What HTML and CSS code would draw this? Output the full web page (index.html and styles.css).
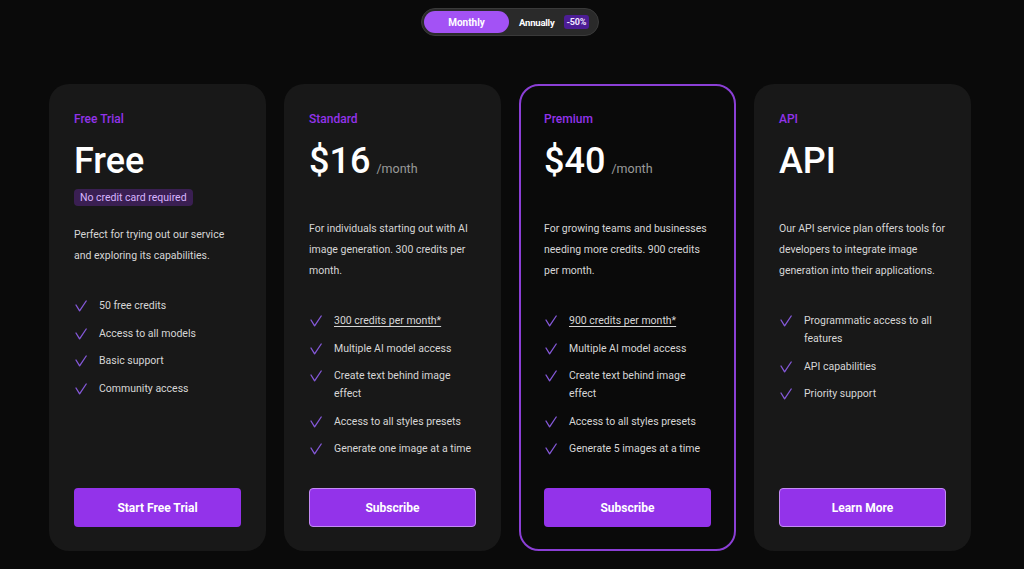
FILE: index.html
```html
<!DOCTYPE html>
<html lang="en">
<head>
<meta charset="utf-8">
<title>Pricing</title>
<link rel="stylesheet" href="styles.css">
</head>
<body>
<div class="page">
  <div class="toggle">
    <button class="toggle-btn active">Monthly</button>
    <div class="toggle-opt">Annually <span class="save">-50%</span></div>
  </div>

  <div class="cards">
    <div class="card">
      <div class="label">Free Trial</div>
      <div class="price"><span class="amount">Free</span></div>
      <div class="badge">No credit card required</div>
      <p class="desc">Perfect for trying out our service and exploring its capabilities.</p>
      <ul class="features">
        <li><svg class="check" viewBox="0 0 12 12"><path d="M1 5 L4.6 10.8 L11.2 1"/></svg><span>50 free credits</span></li>
        <li><svg class="check" viewBox="0 0 12 12"><path d="M1 5 L4.6 10.8 L11.2 1"/></svg><span>Access to all models</span></li>
        <li><svg class="check" viewBox="0 0 12 12"><path d="M1 5 L4.6 10.8 L11.2 1"/></svg><span>Basic support</span></li>
        <li><svg class="check" viewBox="0 0 12 12"><path d="M1 5 L4.6 10.8 L11.2 1"/></svg><span>Community access</span></li>
      </ul>
      <button class="cta">Start Free Trial</button>
    </div>

    <div class="card">
      <div class="label">Standard</div>
      <div class="price"><span class="amount">$16</span><span class="per">/month</span></div>
      <p class="desc">For individuals starting out with AI image generation. 300 credits per month.</p>
      <ul class="features">
        <li><svg class="check" viewBox="0 0 12 12"><path d="M1 5 L4.6 10.8 L11.2 1"/></svg><span class="u">300 credits per month*</span></li>
        <li><svg class="check" viewBox="0 0 12 12"><path d="M1 5 L4.6 10.8 L11.2 1"/></svg><span>Multiple AI model access</span></li>
        <li><svg class="check" viewBox="0 0 12 12"><path d="M1 5 L4.6 10.8 L11.2 1"/></svg><span>Create text behind image effect</span></li>
        <li><svg class="check" viewBox="0 0 12 12"><path d="M1 5 L4.6 10.8 L11.2 1"/></svg><span>Access to all styles presets</span></li>
        <li><svg class="check" viewBox="0 0 12 12"><path d="M1 5 L4.6 10.8 L11.2 1"/></svg><span>Generate one image at a time</span></li>
      </ul>
      <button class="cta outlined">Subscribe</button>
    </div>

    <div class="card featured">
      <div class="label">Premium</div>
      <div class="price"><span class="amount">$40</span><span class="per">/month</span></div>
      <p class="desc">For growing teams and businesses needing more credits. 900 credits per month.</p>
      <ul class="features">
        <li><svg class="check" viewBox="0 0 12 12"><path d="M1 5 L4.6 10.8 L11.2 1"/></svg><span class="u">900 credits per month*</span></li>
        <li><svg class="check" viewBox="0 0 12 12"><path d="M1 5 L4.6 10.8 L11.2 1"/></svg><span>Multiple AI model access</span></li>
        <li><svg class="check" viewBox="0 0 12 12"><path d="M1 5 L4.6 10.8 L11.2 1"/></svg><span>Create text behind image effect</span></li>
        <li><svg class="check" viewBox="0 0 12 12"><path d="M1 5 L4.6 10.8 L11.2 1"/></svg><span>Access to all styles presets</span></li>
        <li><svg class="check" viewBox="0 0 12 12"><path d="M1 5 L4.6 10.8 L11.2 1"/></svg><span>Generate 5 images at a time</span></li>
      </ul>
      <button class="cta">Subscribe</button>
    </div>

    <div class="card">
      <div class="label">API</div>
      <div class="price"><span class="amount">API</span></div>
      <p class="desc">Our API service plan offers tools for developers to integrate image generation into their applications.</p>
      <ul class="features">
        <li><svg class="check" viewBox="0 0 12 12"><path d="M1 5 L4.6 10.8 L11.2 1"/></svg><span>Programmatic access to all features</span></li>
        <li><svg class="check" viewBox="0 0 12 12"><path d="M1 5 L4.6 10.8 L11.2 1"/></svg><span>API capabilities</span></li>
        <li><svg class="check" viewBox="0 0 12 12"><path d="M1 5 L4.6 10.8 L11.2 1"/></svg><span>Priority support</span></li>
      </ul>
      <button class="cta outlined">Learn More</button>
    </div>
  </div>
</div>
</body>
</html>
```

FILE: styles.css
```css
* { box-sizing: border-box; }

html, body {
  margin: 0;
  background: #0a0a0a;
  font-family: Roboto, "Liberation Sans", Arial, sans-serif;
  color: #e5e5e5;
}

.page {
  display: flex;
  flex-direction: column;
  align-items: center;
  padding: 8px 4px 0 0;
  height: 569px;
}

.toggle {
  display: flex;
  align-items: center;
  width: 178px;
  height: 28px;
  padding: 2px;
  border-radius: 14px;
  background: #2a2a2a;
  border: 1px solid #3a3a3a;
}

.toggle-btn {
  width: 85px;
  height: 22px;
  border: 0;
  border-radius: 11px;
  background: #a352f5;
  color: #fff;
  font-family: inherit;
  font-size: 10px;
  font-weight: 700;
  padding: 0;
}

.toggle-opt {
  display: flex;
  align-items: center;
  gap: 9px;
  margin-left: 10px;
  color: #fff;
  font-size: 9.5px;
  font-weight: 700;
  letter-spacing: -0.2px;
}

.save {
  background: #4c1d95;
  color: #f0e6ff;
  font-size: 9px;
  padding: 2px 3px;
  border-radius: 3px;
}

.cards {
  display: flex;
  gap: 18px;
  margin-top: 48px;
}

.card {
  width: 217px;
  height: 467px;
  display: flex;
  flex-direction: column;
  padding: 27px 25px 24px;
  background: #181818;
  border-radius: 20px;
}

.card.featured {
  background: #0a0a0a;
  border: 2px solid #8b3fd6;
  padding: 25px 23px 22px;
}

.label {
  font-size: 12px;
  line-height: 16px;
  font-weight: 500;
  color: #9333ea;
}

.price {
  margin-top: 14px;
  display: flex;
  align-items: baseline;
  gap: 6px;
  height: 40px;
}

.amount {
  font-size: 36px;
  line-height: 40px;
  font-weight: 500;
  color: #fff;
}

.per {
  font-size: 12.5px;
  color: #9a9a9a;
}

.badge {
  align-self: flex-start;
  margin-top: 8px;
  height: 17px;
  line-height: 17px;
  padding: 0 6px;
  font-size: 10.5px;
  color: #d8b4fe;
  background: #3a1f52;
  border-radius: 4px;
}

.desc {
  margin: 37px 0 0;
  font-size: 10.5px;
  line-height: 21px;
  color: #d6d6d6;
}

.badge + .desc { margin-top: 18px; }

.features {
  list-style: none;
  margin: 31px 0 0;
  padding: 0;
  display: flex;
  flex-direction: column;
  gap: 9.5px;
}

.features li {
  display: flex;
  align-items: flex-start;
  gap: 12px;
  font-size: 10.5px;
  line-height: 18px;
  color: #d6d6d6;
}

.check {
  flex: none;
  width: 12px;
  height: 12px;
  margin-top: 3px;
  margin-left: 1px;
  fill: none;
  stroke: #8458d8;
  stroke-width: 1.3;
  stroke-linecap: round;
  stroke-linejoin: round;
}

.u { text-decoration: underline; text-underline-offset: 2px; }

.cta {
  margin-top: auto;
  height: 39px;
  width: 100%;
  border: 1px solid transparent;
  border-radius: 4px;
  background: #9333ea;
  color: #fff;
  font-family: inherit;
  font-size: 12px;
  font-weight: 700;
}

.cta.outlined { border-color: #c48af5; }
```
